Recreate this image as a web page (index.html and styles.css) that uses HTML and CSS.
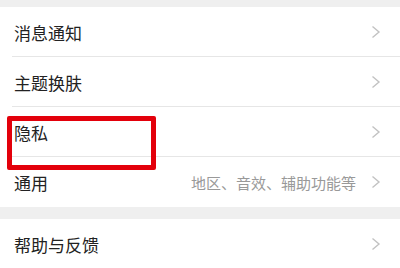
FILE: index.html
```html
<!DOCTYPE html>
<html lang="zh-CN">
<head>
    <meta charset="UTF-8">
    <title>设置</title>
    <link rel="stylesheet" href="styles.css">
</head>
<body>

    <div class="gap-top"></div>

    <div class="group">
        <div class="row">
            <span class="label">消息通知</span>
            <svg class="arrow" width="10" height="14" viewBox="0 0 10 14"><polyline points="1.5,1.5 8,7 1.5,12.5" fill="none" stroke="#c2c2c2" stroke-width="1.4"/></svg>
        </div>
        <div class="row">
            <span class="label">主题换肤</span>
            <svg class="arrow" width="10" height="14" viewBox="0 0 10 14"><polyline points="1.5,1.5 8,7 1.5,12.5" fill="none" stroke="#c2c2c2" stroke-width="1.4"/></svg>
        </div>
        <div class="row">
            <span class="label">隐私</span>
            <svg class="arrow" width="10" height="14" viewBox="0 0 10 14"><polyline points="1.5,1.5 8,7 1.5,12.5" fill="none" stroke="#c2c2c2" stroke-width="1.4"/></svg>
        </div>
        <div class="row last">
            <span class="label">通用</span>
            <span class="hint">地区、音效、辅助功能等</span>
            <svg class="arrow" width="10" height="14" viewBox="0 0 10 14"><polyline points="1.5,1.5 8,7 1.5,12.5" fill="none" stroke="#c2c2c2" stroke-width="1.4"/></svg>
        </div>
    </div>

    <div class="gap"></div>

    <div class="group">
        <div class="row last">
            <span class="label">帮助与反馈</span>
            <svg class="arrow" width="10" height="14" viewBox="0 0 10 14"><polyline points="1.5,1.5 8,7 1.5,12.5" fill="none" stroke="#c2c2c2" stroke-width="1.4"/></svg>
        </div>
    </div>

    <div class="mark"></div>

</body>
</html>
```

FILE: styles.css
```css
body {
    margin: 0;
    background: #fff;
    font-family: "Noto Sans CJK SC", "Noto Sans", sans-serif;
    color: #222;
    position: relative;
    overflow: hidden;
}

.gap-top {
    height: 7px;
    background: #efefef;
}

.gap {
    height: 12px;
    background: #efefef;
}

.row {
    display: flex;
    align-items: center;
    height: 50px;
    padding: 0 19px 0 14px;
    position: relative;
}

.row::after {
    content: "";
    position: absolute;
    left: 12px;
    right: 0;
    bottom: 0;
    height: 1px;
    background: #e6e6e6;
}

.row.last::after {
    display: none;
}

.label {
    flex: 1;
    font-size: 17px;
    line-height: 1;
}

.hint {
    font-size: 15px;
    color: #999;
    margin-right: 15px;
}

.arrow {
    display: block;
}

/* marca vermelha por cima da linha "隐私" */
.mark {
    position: absolute;
    left: 7px;
    top: 116px;
    width: 139px;
    height: 44px;
    border: 5px solid #e3000b;
    border-radius: 2px;
}
```
